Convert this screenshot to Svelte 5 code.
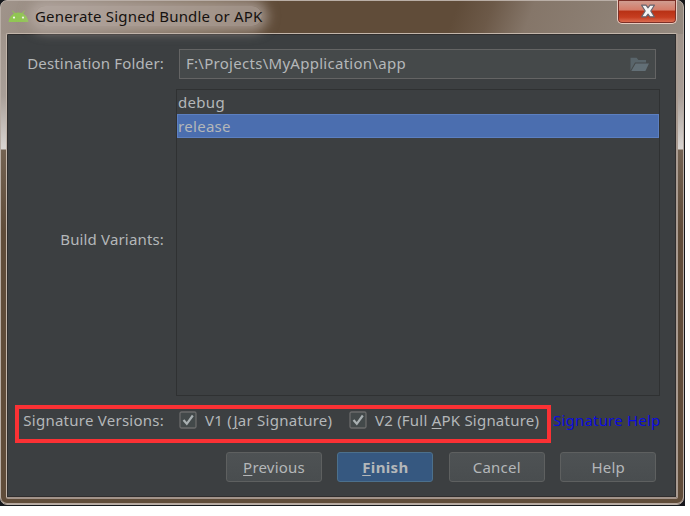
<script>
  let selected = $state('release');
  let v1 = $state(true);
  let v2 = $state(true);
  const variants = ['debug', 'release'];
</script>

{#snippet check(on)}
  <svg class="check" viewBox="0 0 18 18" width="18" height="18">
    <rect x="1" y="1" width="16" height="16" rx="1.5" fill="#43494a" stroke="#6b6b6b" stroke-width="1.3" />
    {#if on}<path d="M4.5 9 L7.8 12.8 L13.8 4.5" fill="none" stroke="#a9b0b2" stroke-width="2.2" />{/if}
  </svg>
{/snippet}

<div class="backdrop">
  <div class="window">
    <header>
      <svg class="android" width="21" height="13" viewBox="0 0 21 13">
        <path d="M0.5 12 C1 7.8 3 5 6 3.4 L4 .8 L4.6 .4 L7 3 Q10.5 1.8 14 3 L16.4 .4 L17 .8 L15 3.4 C18 5 20 7.8 20.5 12Z" fill="#91c653" />
        <circle cx="6" cy="7.6" r="1.1" fill="#f3f8e9" /><circle cx="15" cy="7.6" r="1.1" fill="#f3f8e9" />
      </svg>
      <span class="title">Generate Signed Bundle or APK</span>
      <button class="close" aria-label="Close">
        <svg width="16" height="14" viewBox="0 0 16 14">
          <path d="M1.6 1.2H6L8 3.8L10 1.2H14.4L10.8 7L14.4 12.8H10L8 10.2L6 12.8H1.6L5.2 7Z" fill="#f4f4f4" stroke="#66646e" stroke-width="1.2" stroke-linejoin="round" />
        </svg>
      </button>
    </header>

    <main>
      <div class="row folder">
        <span class="label dest">Destination Folder:</span>
        <div class="field">
          <span class="path">F:\Projects\MyApplication\app</span>
          <svg width="20" height="15" viewBox="0 0 20 15">
            <path d="M.5 13.5V.8H6.6L8.4 3H16V5.5H5L.5 13.5Z" fill="#59656b" />
            <path d="M5.6 6.5H19L15.4 14H1.3Z" fill="#626f76" />
          </svg>
        </div>
      </div>

      <div class="row variants">
        <span class="label build">Build Variants:</span>
        <div class="list">
          {#each variants as name}
            <button class="item" class:selected={selected === name} onclick={() => (selected = name)}>{name}</button>
          {/each}
        </div>
      </div>

      <div class="row signature">
        <span class="label versions">Signature Versions:</span>
        <button class="option first" onclick={() => (v1 = !v1)}>{@render check(v1)}<span>V1 (<u>J</u>ar Signature)</span></button>
        <button class="option second" onclick={() => (v2 = !v2)}>{@render check(v2)}<span>V2 (Full <u>A</u>PK Signature)</span></button>
        <span class="link">Signature Help</span>
        <div class="highlight"></div>
      </div>

      <footer>
        <button class="btn"><span><u>P</u>revious</span></button>
        <button class="btn primary"><span><u>F</u>inish</span></button>
        <button class="btn"><span>Cancel</span></button>
        <button class="btn"><span>Help</span></button>
      </footer>
    </main>
  </div>
</div>

<style>
  :global(body) {
    background: #fff;
  }
  .backdrop,
  .backdrop :global(*) {
    box-sizing: border-box;
  }
  .backdrop {
    width: 685px;
    height: 506px;
    background: #15171b;
  }
  .window {
    width: 684px;
    height: 505px;
    padding: 0 5px 5px;
    border: 1px solid #b9aea6;
    border-radius: 7px;
    background:
      linear-gradient(110deg, #a0948b 0, #918479 12%, #75634f 30%, #604c39 39%, #604c39 66%, #6c5948 71%, #857669 77%, #958a80 100%) no-repeat 0 0 / 100% 33px,
      linear-gradient(#a0948b 33px, #a99f98 95px, #d9d5d2 148px, #736252 149px, #604c39 230px, #604c39);
    font: 15px/20px "Noto Sans", "Open Sans", sans-serif;
    color: #b4b7b9;
    box-shadow: inset 0 -1px #b5a79e;
  }
  button {
    font: inherit;
    color: inherit;
    padding: 0;
    border: 0;
    background: none;
    text-align: left;
  }
  span {
    white-space: nowrap;
  }
  u {
    text-underline-offset: 2px;
    text-decoration-thickness: 1px;
  }
  header {
    display: flex;
    height: 32px;
    align-items: flex-start;
  }
  .android {
    flex: none;
    margin: 9px 0 0 2px;
  }
  .title {
    margin: 5px 0 0 6px;
    color: #15110f;
    border-radius: 10px;
    background: #bbb0a9aa;
    box-shadow: 0 0 12px 6px #bbb0a9aa;
    letter-spacing: 0.18px;
  }
  .close {
    width: 60px;
    height: 24px;
    margin: -1px 1px 0 auto;
    display: flex;
    align-items: center;
    justify-content: center;
    padding: 0 0 2px 1px;
    border: 1px solid #e7cbc0;
    border-top: 0;
    border-radius: 0 0 5px 5px;
    box-shadow: inset 0 0 0 1px #7c3027;
    background: linear-gradient(#d0a094, #d47d6a 42%, #b93216 50%, #c63d20 75%, #df765b);
  }
  main {
    height: 466px;
    background: #3c3f41;
    border: 1px solid #c3b6ab;
    border-right: 2px solid #a99b91;
    border-bottom: 2px solid #a3948a;
    border-radius: 2px;
    box-shadow: inset 0 0 0 1px #302e2e;
    padding-top: 15px;
  }
  .row {
    display: flex;
    align-items: center;
  }
  .label {
    width: 157px;
    flex: none;
    text-align: right;
  }
  .dest,
  .build {
    letter-spacing: 0.16px;
  }
  .versions {
    letter-spacing: 0.25px;
  }
  .folder {
    height: 30px;
  }
  .dest,
  .path {
    position: relative;
    top: -1px;
  }
  .path {
    letter-spacing: 0.28px;
  }
  .field {
    width: 477px;
    height: 30px;
    margin-left: 15px;
    padding: 0 5px 0 6px;
    display: flex;
    align-items: center;
    justify-content: space-between;
    background: #45494a;
    border: 1px solid #646464;
  }
  .variants {
    height: 307px;
    margin-top: 10px;
  }
  .build {
    padding-bottom: 7px;
  }
  .list {
    width: 484px;
    height: 307px;
    margin-left: 12px;
    border: 1px solid #2f3132;
  }
  .item {
    display: flex;
    align-items: center;
    width: 100%;
    height: 24px;
    padding-left: 1px;
    letter-spacing: 0.3px;
  }
  .item.selected {
    background: #4b6eaf;
    border: 1px solid #5c7fc0;
    padding-left: 0;
  }
  .signature {
    position: relative;
    height: 38px;
    margin-top: 9px;
    padding-bottom: 8px;
  }
  .highlight {
    position: absolute;
    left: 8px;
    top: 0;
    width: 536px;
    height: 38px;
    border: 4px solid #fb3134;
    pointer-events: none;
  }
  .option {
    display: flex;
    align-items: center;
    gap: 8px;
    letter-spacing: 0.27px;
  }
  .first {
    width: 170px;
    margin-left: 15px;
  }
  .second {
    width: 204px;
    letter-spacing: 0.22px;
  }
  .link {
    color: #0b0bdf;
    letter-spacing: 0.2px;
  }
  footer {
    display: flex;
    gap: 15.4px;
    margin: 9px 0 0 219px;
  }
  .btn {
    width: 96px;
    height: 30px;
    display: flex;
    align-items: center;
    justify-content: center;
    border: 1px solid #5e6060;
    border-radius: 3px;
    background: linear-gradient(#4e5254, #494d4f);
    letter-spacing: 0.2px;
  }
  .primary {
    font-weight: 700;
    background: #365880;
    border-color: #4c708c;
    letter-spacing: 0.35px;
  }
</style>
